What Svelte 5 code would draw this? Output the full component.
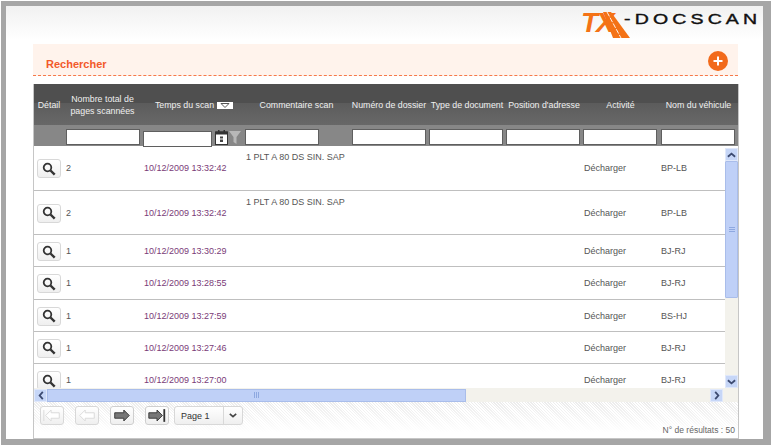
<script lang="ts">
	const columns = [
		{ label: 'Détail' },
		{ label: 'Nombre total de pages scannées', filter: true },
		{ label: 'Temps du scan', filter: true, sort: true, date: true },
		{ label: 'Commentaire scan', filter: true },
		{ label: 'Numéro de dossier', filter: true },
		{ label: 'Type de document', filter: true },
		{ label: "Position d'adresse", filter: true },
		{ label: 'Activité', filter: true },
		{ label: 'Nom du véhicule', filter: true }
	]

	const rows = [
		{ pages: 2, time: '10/12/2009 13:32:42', note: '1 PLT A 80 DS SIN. SAP', car: 'BP-LB', tall: true },
		{ pages: 2, time: '10/12/2009 13:32:42', note: '1 PLT A 80 DS SIN. SAP', car: 'BP-LB', tall: true },
		{ pages: 1, time: '10/12/2009 13:30:29', note: '', car: 'BJ-RJ' },
		{ pages: 1, time: '10/12/2009 13:28:55', note: '', car: 'BJ-RJ' },
		{ pages: 1, time: '10/12/2009 13:27:59', note: '', car: 'BS-HJ' },
		{ pages: 1, time: '10/12/2009 13:27:46', note: '', car: 'BJ-RJ' },
		{ pages: 1, time: '10/12/2009 13:27:00', note: '', car: 'BJ-RJ' }
	]
</script>

<div class="frame">
	<header class="top">
		<div class="logo">
			<span class="tx">TX</span>
			<svg class="road" viewBox="0 0 32 28" width="32" height="28">
				<polygon points="3,1 11,1 30,27 13,27" fill="#f47216" />
				<path d="M7 1l14 26" stroke="#fff" stroke-width="0.9" stroke-dasharray="5 1.5" />
			</svg>
			<span class="brand">-DOCSCAN</span>
		</div>
	</header>

	<div class="panel">
		<div class="search">
			<h2>Rechercher</h2>
			<span class="add">
				<svg viewBox="0 0 20 20" width="20" height="20">
					<circle cx="10" cy="10" r="10" fill="#f26a1b" />
					<path d="M10 5.5v9M5.5 10h9" stroke="#fff" stroke-width="2" />
				</svg>
			</span>
		</div>

		<div class="grid">
			<div class="head cols">
				{#each columns as col}
					<div class="th">
						<span>{col.label}</span>
						{#if col.sort}
							<svg class="sort" viewBox="0 0 16 7" width="16" height="7">
								<rect width="16" height="7" fill="#fff" />
								<path d="M4 1.5h8L8 5.5z" fill="none" stroke="#555" />
							</svg>
						{/if}
					</div>
				{/each}
			</div>
			<div class="filters cols">
				{#each columns as col}
					<div class="fcell" class:datecell={col.date}>
						{#if col.filter}
							<input type="text" class:date={col.date} />
						{/if}
						{#if col.date}
							<svg class="cal" viewBox="0 0 13 15" width="13" height="15">
								<rect x="0.5" y="2" width="12" height="12.5" fill="#fff" stroke="#333" />
								<rect x="0.5" y="1.5" width="12" height="3" fill="#333" />
								<rect x="3" y="0" width="1.5" height="3" fill="#333" />
								<rect x="8.5" y="0" width="1.5" height="3" fill="#333" />
								<rect x="5" y="6.5" width="3" height="2" fill="#444" />
								<rect x="5" y="9.5" width="3" height="2.5" fill="#444" />
							</svg>
							<svg class="funnel" viewBox="0 0 12 15" width="12" height="15">
								<path d="M0 1h12L7.5 7v7l-3-2V7z" fill="#b8b8b8" />
							</svg>
						{/if}
					</div>
				{/each}
			</div>

			<div class="body">
				<div class="rows">
					{#each rows as row}
						<div class="row cols" class:tall={row.tall}>
							<div class="td">
								<button class="btn loupe" aria-label="Détail">
									<svg viewBox="0 0 14 14" width="14" height="14">
										<circle cx="5.5" cy="5.5" r="3.8" fill="none" stroke="#333" stroke-width="1.8" />
										<path d="M8.5 8.5l4.2 4.2" stroke="#333" stroke-width="2.4" />
									</svg>
								</button>
							</div>
							<div class="td">{row.pages}</div>
							<div class="td time">{row.time}</div>
							<div class="td note">{row.note}</div>
							<div class="td"></div>
							<div class="td"></div>
							<div class="td"></div>
							<div class="td">Décharger</div>
							<div class="td">{row.car}</div>
						</div>
					{/each}
				</div>
				<div class="vbar">
					<span class="arrow">
						<svg viewBox="0 0 10 6" width="9" height="6"><path d="M1 5l4-3.5L9 5" fill="none" stroke="#3c4a70" stroke-width="2" /></svg>
					</span>
					<div class="vtrack">
						<div class="vthumb"><span class="vgrip"></span></div>
					</div>
					<span class="arrow">
						<svg viewBox="0 0 10 6" width="9" height="6"><path d="M1 1l4 3.5L9 1" fill="none" stroke="#3c4a70" stroke-width="2" /></svg>
					</span>
				</div>
			</div>

			<div class="hbar">
				<span class="arrow">
					<svg viewBox="0 0 6 10" width="6" height="9"><path d="M5 1L1.5 5 5 9" fill="none" stroke="#3c4a70" stroke-width="2" /></svg>
				</span>
				<div class="htrack">
					<div class="hthumb"><span class="hgrip"></span></div>
				</div>
				<span class="arrow">
					<svg viewBox="0 0 6 10" width="6" height="9"><path d="M1 1l3.5 4L1 9" fill="none" stroke="#3c4a70" stroke-width="2" /></svg>
				</span>
				<div class="corner"></div>
			</div>

			<div class="pager">
				<div class="nav">
					<button class="btn pg" aria-label="Première page">
						<svg viewBox="0 0 22 14" width="20" height="13"><path d="M2 1v12M4 7l6-6v3h9v6h-9v3z" fill="#fff" stroke="#d8d8d8" /></svg>
					</button>
					<button class="btn pg" aria-label="Page précédente">
						<svg viewBox="0 0 22 14" width="20" height="13"><path d="M3 7l6-6v3h10v6H9v3z" fill="#fff" stroke="#d8d8d8" /></svg>
					</button>
					<button class="btn pg" aria-label="Page suivante">
						<svg viewBox="0 0 22 14" width="20" height="13"><path d="M19 7l-6-6v3H3v6h10v3z" fill="#777" stroke="#333" /></svg>
					</button>
					<button class="btn pg" aria-label="Dernière page">
						<svg viewBox="0 0 22 14" width="20" height="13"><path d="M17 7l-6-6v3H2v6h9v3z" fill="#777" stroke="#333" /><path d="M19 0v14" stroke="#333" stroke-width="2" /></svg>
					</button>
					<div class="select">
						<span class="page">Page 1</span>
						<span class="drop">
							<svg viewBox="0 0 10 6" width="8" height="5"><path d="M1 1l4 3.5L9 1" fill="none" stroke="#444" stroke-width="2" /></svg>
						</span>
					</div>
				</div>
				<div class="count">N° de résultats : 50</div>
			</div>
		</div>
	</div>
</div>

<style>
	:global(body) {
		margin: 0;
		background: #fff;
	}

	.frame {
		width: 770px;
		height: 444px;
		margin: 1px 0 0 1px;
		box-sizing: border-box;
		border: solid #a6a6a6;
		border-width: 5px 8px 6px 5px;
		background: linear-gradient(#f1f1f1, #fff 34px);
		padding: 0 24px 0 27px;
		font-family: 'Liberation Sans', Arial, sans-serif;
		font-size: 9px;
		color: #444;
		display: flex;
		flex-direction: column;
		overflow: hidden;
	}

	.top {
		height: 38px;
		flex: none;
	}

	.logo {
		display: flex;
		align-items: flex-start;
		padding-left: 548px;
		position: relative;
	}

	.tx {
		font: italic bold 28px/1 'Liberation Sans', sans-serif;
		color: #f47216;
		margin-top: 3px;
		letter-spacing: -2px;
		width: 43px;
		flex: none;
	}

	.road {
		position: absolute;
		left: 567px;
		top: 5px;
	}

	.brand {
		font: 15px/1 'Liberation Sans', sans-serif;
		-webkit-text-stroke: 0.4px #111;
		color: #111;
		letter-spacing: 3.2px;
		margin-top: 5px;
		transform: scaleX(1.3);
		transform-origin: left;
		white-space: nowrap;
	}

	.panel {
		flex: 1;
		display: flex;
		flex-direction: column;
		min-height: 0;
	}

	.search {
		height: 31px;
		flex: none;
		background: #fff3ec;
		border-bottom: 1px dashed #f6794a;
		display: flex;
		align-items: flex-end;
		justify-content: space-between;
		padding: 0 10px 0 13px;
		margin-bottom: 8px;
		width: 682px;
	}

	h2 {
		margin: 0 0 5px;
		font-size: 11px;
		font-weight: bold;
		color: #f2592a;
	}

	.add {
		height: 20px;
		margin-bottom: 4px;
	}

	.grid {
		flex: 1;
		min-height: 0;
		display: flex;
		flex-direction: column;
		width: 706px;
		border: solid #c6c6c6;
		border-width: 0 1px 1px;
		box-sizing: border-box;
	}

	.cols {
		display: grid;
		grid-template-columns: 30px 77px 102px 107px 78px 78px 76px 77px 79px;
		flex: none;
	}

	.head {
		height: 41px;
		background: linear-gradient(#4f4f4f 46%, #5c5c5c 47%, #686868);
		color: #f0f0f0;
	}

	.th {
		display: flex;
		align-items: center;
		justify-content: center;
		gap: 3px;
		text-align: center;
		line-height: 12px;
		font-size: 8.8px;
		white-space: nowrap;
		padding-top: 1px;
	}

	.th:nth-child(2) {
		white-space: normal;
		padding: 0 4px;
	}

	.th:nth-child(3) {
		padding-left: 4px;
	}

	.sort {
		flex: none;
	}

	.filters {
		height: 21px;
		background: #878787;
	}

	.fcell {
		display: flex;
		align-items: flex-start;
		padding: 4px 0 0 2px;
	}

	.fcell:nth-child(6),
	.fcell:nth-child(8) {
		padding-left: 1px;
	}

	.fcell:nth-child(7) {
		padding-left: 0;
	}

	.datecell {
		position: relative;
		padding-top: 6px;
	}

	input {
		display: block;
		width: 74px;
		flex: none;
		height: 16px;
		box-sizing: border-box;
		border: 1px solid #5f5f5f;
		background: #fff;
		padding: 0;
	}

	input.date {
		width: 69px;
	}

	.cal {
		flex: none;
		margin: -1px 0 0 3px;
	}

	.funnel {
		flex: none;
		margin-top: -1px;
		margin-left: 1px;
	}

	.body {
		flex: none;
		height: 242px;
		display: flex;
		background: #fff;
	}

	.rows {
		width: 691px;
		overflow: hidden;
	}

	.row {
		height: 31.2px;
		border-bottom: 1px solid #bfbfbf;
		box-sizing: content-box;
		width: 704px;
	}

	.row.tall {
		height: 43.6px;
	}

	.td {
		display: flex;
		align-items: center;
		padding: 2px 0 0 2px;
		color: #555;
		white-space: nowrap;
		overflow: hidden;
		line-height: 11px;
	}

	.td:first-child {
		padding-left: 3px;
	}

	.time {
		color: #7a3b78;
		padding-left: 3px;
	}

	.note {
		padding-left: 3px;
		align-items: flex-start;
		padding-top: 6px;
	}

	.btn {
		display: flex;
		align-items: center;
		justify-content: center;
		padding: 0;
		background: linear-gradient(#fff, #efefef);
		border: 1px solid #d8d8d8;
		border-radius: 3px;
		box-sizing: border-box;
	}

	.loupe {
		width: 24px;
		height: 19px;
	}

	.vbar {
		width: 13px;
		flex: none;
		display: flex;
		flex-direction: column;
		background: #f3f2ec;
		padding-top: 2px;
		box-sizing: border-box;
		box-shadow: inset 0 2px 0 #fff;
	}

	.arrow {
		flex: none;
		display: flex;
		align-items: center;
		justify-content: center;
		width: 13px;
		height: 13px;
		background: #c6d6f7;
		border: 1px solid #e0e8fa;
		box-sizing: border-box;
	}

	.vtrack {
		flex: 1;
	}

	.vthumb {
		height: 137px;
		background: #bfd0f7;
		border: 1px solid #a9bdea;
		box-sizing: border-box;
		border-radius: 1px;
		display: flex;
		align-items: center;
		justify-content: center;
	}

	.vgrip {
		width: 6px;
		height: 5px;
		background: repeating-linear-gradient(#8ea8e0 0 1px, transparent 1px 2px);
	}

	.hbar {
		height: 14px;
		flex: none;
		display: flex;
		align-items: center;
		background: #f3f2ec;
	}

	.htrack {
		width: 663px;
		height: 13px;
	}

	.hthumb {
		width: 419px;
		height: 13px;
		background: #bfd0f7;
		border: 1px solid #a9bdea;
		box-sizing: border-box;
		display: flex;
		align-items: center;
		justify-content: center;
	}

	.hgrip {
		width: 5px;
		height: 6px;
		background: repeating-linear-gradient(90deg, #8ea8e0 0 1px, transparent 1px 2px);
	}

	.corner {
		flex: 1;
	}

	.pager {
		flex: 1;
		min-height: 0;
		display: flex;
		justify-content: space-between;
		padding: 4px 3px 3px 6px;
		background:
			linear-gradient(rgba(255, 255, 255, 0), #fff 85%),
			repeating-linear-gradient(45deg, #ececec 0 1px, #fff 1px 2px);
	}

	.nav {
		display: flex;
		align-items: flex-start;
		gap: 11px;
	}

	.pg {
		width: 24px;
		height: 19px;
	}

	.pg:nth-child(n + 3) {
		border-color: #cfcfcf;
	}

	.select {
		display: flex;
		width: 69px;
		height: 19px;
		margin-left: -6px;
		border: 1px solid #d8d8d8;
		border-radius: 3px;
		box-sizing: border-box;
		background: linear-gradient(#fff, #efefef);
	}

	.page {
		flex: 1;
		padding: 4px 0 0 6px;
		color: #333;
	}

	.drop {
		width: 18px;
		display: flex;
		align-items: center;
		justify-content: center;
		border-left: 1px solid #d8d8d8;
	}

	.count {
		align-self: flex-end;
		font-size: 8.5px;
		color: #666;
	}
</style>
